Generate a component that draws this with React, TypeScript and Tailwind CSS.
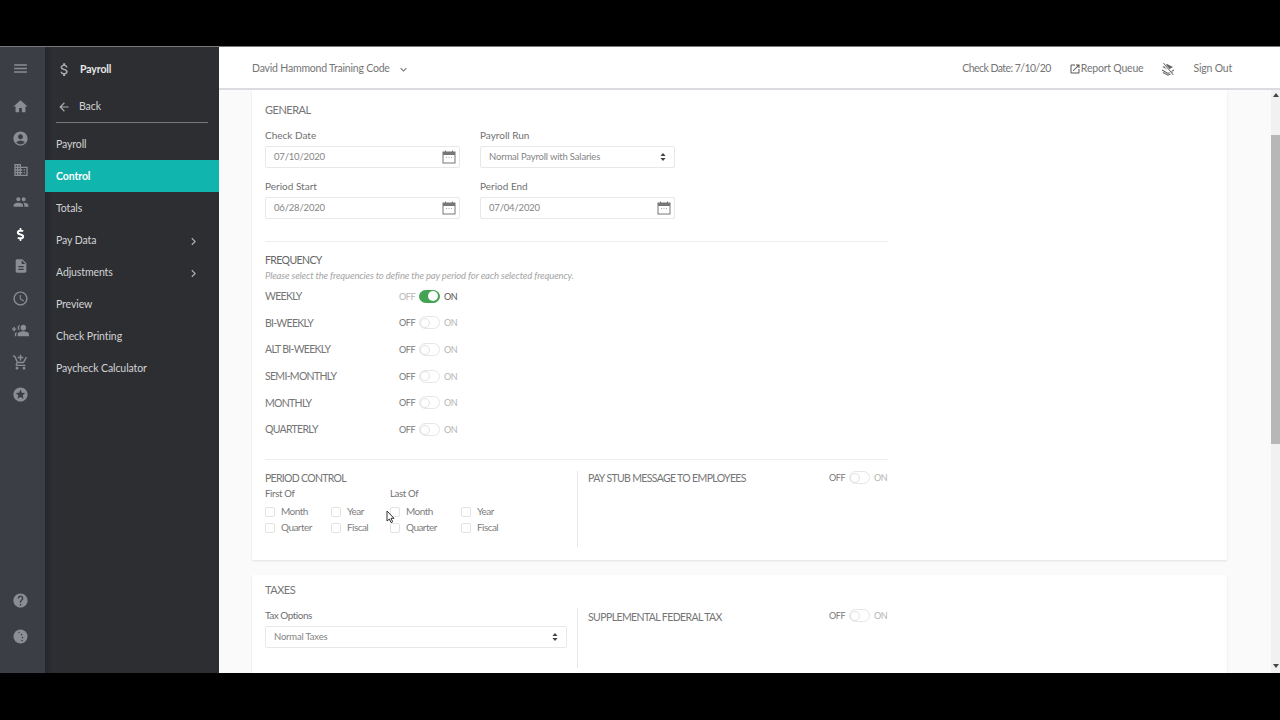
import React from "react";
import {
  MdMenu, MdHome, MdAccountCircle, MdDomain, MdPeople, MdDescription, MdAccessTime,
  MdGroupAdd, MdAddShoppingCart, MdStars, MdHelp, MdOpenInNew, MdAttachMoney,
  MdKeyboardArrowDown, MdChevronRight, MdArrowBack,
} from "react-icons/md";
import { FaDollarSign } from "react-icons/fa";

const railIcons = [
  { Icon: MdHome, size: 17 },
  { Icon: MdAccountCircle, size: 17 },
  { Icon: MdDomain, size: 16 },
  { Icon: MdPeople, size: 16 },
  { Icon: FaDollarSign, size: 13, active: true },
  { Icon: MdDescription, size: 16 },
  { Icon: MdAccessTime, size: 17 },
  { Icon: MdGroupAdd, size: 17, flip: true },
  { Icon: MdAddShoppingCart, size: 17 },
  { Icon: MdStars, size: 17 },
];

const navItems = [
  { label: "Payroll" },
  { label: "Control", active: true },
  { label: "Totals" },
  { label: "Pay Data", arrow: true },
  { label: "Adjustments", arrow: true },
  { label: "Preview" },
  { label: "Check Printing" },
  { label: "Paycheck Calculator" },
];

const frequencies = ["WEEKLY", "BI-WEEKLY", "ALT BI-WEEKLY", "SEMI-MONTHLY", "MONTHLY", "QUARTERLY"];

const CalendarIcon = () => (
  <svg width="14" height="14" viewBox="0 0 14 14" fill="none" className="shrink-0">
    <rect x="1" y="2" width="12" height="11" stroke="#777" strokeWidth="1" />
    <rect x="1" y="2" width="12" height="3" fill="#777" />
    <path d="M3.5 0.5v2M10.5 0.5v2" stroke="#777" strokeWidth="1" />
    <path d="M4 7.5h1M6.5 7.5h1M9 7.5h1" stroke="#aaa" strokeWidth="1" />
  </svg>
);

const SortIcon = () => (
  <svg width="6" height="8" viewBox="0 0 6 8" className="shrink-0">
    <path d="M3 0L5.6 3H.4zM3 8L.4 5h5.2z" fill="#444" />
  </svg>
);

const LayersOffIcon = () => (
  <svg width="14" height="14" viewBox="0 0 14 14" fill="none" className="shrink-0">
    <path d="M1.5 5L6 2l6 3-5 3z" fill="#666" />
    <path d="M1 8l6 3.4L13 8M2 10.4l5 2.8 5-2.8" stroke="#666" strokeWidth="1.1" />
    <path d="M2 1l10 12" stroke="#fff" strokeWidth="2.2" />
    <path d="M2.4 1l10 12" stroke="#666" strokeWidth="1" />
  </svg>
);

const DotsIcon = () => (
  <svg width="15" height="15" viewBox="0 0 15 15">
    <circle cx="7.5" cy="7.5" r="7" fill="#8b8d93" />
    <circle cx="6" cy="3.5" r=".7" fill="#3a3d44" />
    <circle cx="8.5" cy="5.5" r=".8" fill="#3a3d44" />
    <circle cx="9.5" cy="8.5" r=".8" fill="#3a3d44" />
    <circle cx="9" cy="11.5" r=".8" fill="#3a3d44" />
  </svg>
);

const Toggle = ({ on = false }: { on?: boolean }) => (
  <div className="flex items-center text-[9px] tracking-[-0.4px]">
    <span className={`w-[15px] ${on ? "text-[#b5b5b5]" : "text-[#777]"}`}>OFF</span>
    <span
      className={`ml-[5px] mr-1 flex h-[13px] w-[21px] items-center rounded-full border ${
        on ? "justify-end border-[#43a352] bg-[#43a352] pr-px" : "border-[#e6e6e6] bg-white"
      }`}
    >
      <span className={`h-[10px] w-[10px] rounded-full bg-white ${on ? "" : "border border-[#e2e2e2]"}`} />
    </span>
    <span className={`w-3 ${on ? "text-[#555]" : "text-[#b5b5b5]"}`}>ON</span>
  </div>
);

const Field = ({ label, value, select = false }: { label: string; value: string; select?: boolean }) => (
  <div className="w-[195px]">
    <div className="h-[14px] text-[10px] leading-[14px] text-[#707070]">{label}</div>
    <div className="mt-1 flex h-[22px] items-center justify-between rounded-[2px] border border-[#e8e8e8] bg-white pl-2 pr-[3px] text-[9.5px] tracking-[-0.18px] text-[#858585]">
      <span>{value}</span>
      {select ? <span className="pr-[5px]"><SortIcon /></span> : <CalendarIcon />}
    </div>
  </div>
);

const Check = ({ label }: { label: string }) => (
  <div className="flex h-4 items-center text-[10px] tracking-[-0.55px] text-[#808080]">
    <span className="mr-[6px] h-[10px] w-[10px] rounded-[2px] border border-[#e2e2e2] bg-white" />
    {label}
  </div>
);

export default function App() {
  return (
    <div
      className="flex h-[720px] w-[1280px] flex-col overflow-hidden bg-black pt-[46px]"
      style={{ fontFamily: "Lato, 'Noto Sans', sans-serif" }}
    >
      <div className="flex h-[627px] border-t border-[#77787a]">
        {/* icon rail */}
        <aside className="flex w-[45px] shrink-0 flex-col items-center bg-[#3b3e45] pb-[19px] pr-[4px] text-[#8b8d93]">
          <div className="flex h-[43px] items-center justify-center"><MdMenu size={17} /></div>
          {railIcons.map(({ Icon, size, active, flip }, i) => (
            <div key={i} className={`flex h-8 items-center justify-center ${active ? "text-white" : ""}`}>
              <Icon size={size} className={flip ? "-scale-x-100" : ""} />
            </div>
          ))}
          <div className="mt-auto flex h-9 items-center justify-center"><MdHelp size={17} /></div>
          <div className="flex h-9 items-center justify-center"><DotsIcon /></div>
        </aside>

        {/* sub navigation */}
        <nav className="w-[174px] shrink-0 bg-[#2d2e32] bg-[linear-gradient(90deg,#26272f_0,#2a2b31_5px,#2d2e32_8px)] text-[10.5px] tracking-[-0.1px] text-[#d2d3d5]">
          <div className="flex h-[43px] items-center pl-[11px] pt-[2px] font-bold text-white">
            <MdAttachMoney size={17} className="text-[#a9aaad]" />
            <span className="ml-[7px] text-[#e6e6e7]">Payroll</span>
          </div>
          <div className="mx-[11px] flex h-[33px] items-center border-b border-[#77787a] pl-px pt-px">
            <MdArrowBack size={14} className="text-[#a9aaad]" />
            <span className="ml-[8px]">Back</span>
          </div>
          <div className="mt-[5px]">
            {navItems.map((item) => (
              <div
                key={item.label}
                className={`flex h-8 items-center justify-between pl-[11px] pr-[18px] pt-[2px] ${
                  item.active ? "bg-[#10b5ae] font-bold text-white" : ""
                }`}
              >
                {item.label}
                {item.arrow && <MdChevronRight size={15} className="text-[#a9aaad]" />}
              </div>
            ))}
          </div>
        </nav>

        <div className="flex min-w-0 flex-1 flex-col bg-[#fafafb]">
          {/* top bar */}
          <header className="flex h-[43px] shrink-0 items-center justify-between border-b-2 border-[#dcdce0] bg-white pl-[33px] pr-[48px] pt-[3px] text-[10.5px] tracking-[-0.2px] text-[#757575]">
            <div className="flex items-center">
              David Hammond Training Code
              <MdKeyboardArrowDown size={13} className="ml-[7px]" />
            </div>
            <div className="flex items-center">
              <span className="tracking-[-0.55px]">Check Date: 7/10/20</span>
              <MdOpenInNew size={12} className="ml-[18px] text-[#555]" />
              <span>Report Queue</span>
              <span className="ml-[18px]"><LayersOffIcon /></span>
              <span className="ml-[18px]">Sign Out</span>
            </div>
          </header>

          <div className="flex min-h-0 flex-1">
            <main className="min-w-0 flex-1 overflow-hidden pl-[33px] pr-[44px]">
              {/* general card */}
              <section className="h-[470px] bg-white pl-[13px] pt-[12px] shadow-[0_1px_2px_rgba(0,0,0,0.1)]">
                <div className="w-[623px]">
                  <h2 className="h-4 text-[11px] leading-4 tracking-[-0.5px] text-[#757575]">GENERAL</h2>
                  <div className="mt-[10px] flex gap-5">
                    <Field label="Check Date" value="07/10/2020" />
                    <Field label="Payroll Run" value="Normal Payroll with Salaries" select />
                  </div>
                  <div className="mt-[11px] flex gap-5">
                    <Field label="Period Start" value="06/28/2020" />
                    <Field label="Period End" value="07/04/2020" />
                  </div>
                  <div className="mt-[22px] border-t border-[#eeeeee]" />
                  <h2 className="mt-[10px] h-4 text-[10.5px] leading-4 tracking-[-0.6px] text-[#666]">FREQUENCY</h2>
                  <p className="mt-[2px] h-3 text-[9.5px] italic leading-3 tracking-[-0.13px] text-[#a5a5a5]">
                    Please select the frequencies to define the pay period for each selected frequency.
                  </p>
                  <div className="mt-px">
                    {frequencies.map((f, i) => (
                      <div key={f} className="flex h-[26.67px] items-center text-[10.5px] tracking-[-0.7px] text-[#757575]">
                        <span className="w-[134px] pt-px">{f}</span>
                        <Toggle on={i === 0} />
                      </div>
                    ))}
                  </div>
                  <div className="mt-[16px] border-t border-[#eeeeee]" />
                  <div className="flex">
                    <div className="relative w-[312px] pt-[10px]">
                      <h2 className="h-4 text-[10.5px] leading-4 tracking-[-0.7px] text-[#757575]">PERIOD CONTROL</h2>
                      <div className="flex">
                        <div className="w-[125px]">
                          <div className="h-[15px] text-[9.5px] leading-[15px] tracking-[-0.3px] text-[#707070]">First Of</div>
                          <div className="mt-[3px] grid grid-cols-[66px_auto]">
                            <Check label="Month" />
                            <Check label="Year" />
                            <Check label="Quarter" />
                            <Check label="Fiscal" />
                          </div>
                        </div>
                        <div className="flex-1">
                          <div className="h-[15px] text-[9.5px] leading-[15px] tracking-[-0.3px] text-[#707070]">Last Of</div>
                          <div className="mt-[3px] grid grid-cols-[71px_auto]">
                            <Check label="Month" />
                            <Check label="Year" />
                            <Check label="Quarter" />
                            <Check label="Fiscal" />
                          </div>
                        </div>
                      </div>
                      {/* mouse pointer */}
                      <svg width="10" height="14" viewBox="0 0 10 14" className="absolute left-[121px] top-[50px]">
                        <path d="M1 1v10l2.4-2 1.6 3.6 1.7-.8L5 8.3h3z" fill="#fff" stroke="#333" strokeWidth="1" />
                      </svg>
                    </div>
                    <div className="mt-[11px] flex h-[76px] flex-1 items-start justify-between border-l border-[#e6e6e6] pl-[10px] pr-[2px]">
                      <span className="text-[10.5px] leading-[14px] tracking-[-0.65px] text-[#757575]">PAY STUB MESSAGE TO EMPLOYEES</span>
                      <Toggle />
                    </div>
                  </div>
                </div>
              </section>

              {/* taxes card */}
              <section className="mt-[15px] h-[120px] bg-white pl-[13px] pt-[6px] shadow-[0_1px_2px_rgba(0,0,0,0.1)]">
                <div className="w-[623px]">
                  <h2 className="h-[18px] text-[11px] leading-[18px] tracking-[-0.5px] text-[#757575]">TAXES</h2>
                  <div className="mt-[9px] flex">
                    <div className="w-[312px] pr-[10px]">
                      <div className="h-[14px] text-[10px] leading-[14px] tracking-[-0.5px] text-[#707070]">Tax Options</div>
                      <div className="mt-1 flex h-[22px] items-center justify-between rounded-[2px] border border-[#e8e8e8] bg-white pl-2 pr-2 text-[9.5px] tracking-[-0.2px] text-[#858585]">
                        <span>Normal Taxes</span>
                        <SortIcon />
                      </div>
                    </div>
                    <div className="flex h-[60px] flex-1 items-start justify-between border-l border-[#e6e6e6] pl-[10px] pr-[2px]">
                      <span className="mt-[2px] text-[10.5px] leading-[14px] tracking-[-0.6px] text-[#757575]">SUPPLEMENTAL FEDERAL TAX</span>
                      <div className="mt-px"><Toggle /></div>
                    </div>
                  </div>
                </div>
              </section>
            </main>

            {/* scrollbar */}
            <div className="flex w-[9px] shrink-0 flex-col bg-[#f1f1f1]">
              <div className="flex h-[45px] justify-center pt-[3px]">
                <span className="h-0 w-0 border-x-[3px] border-b-[4px] border-x-transparent border-b-[#444]" />
              </div>
              <div className="h-[309px] bg-[#b7b7b7]" />
              <div className="mt-auto flex h-[9px] justify-center">
                <span className="h-0 w-0 border-x-[3px] border-t-[4px] border-x-transparent border-t-[#444]" />
              </div>
            </div>
          </div>
        </div>
      </div>
    </div>
  );
}
